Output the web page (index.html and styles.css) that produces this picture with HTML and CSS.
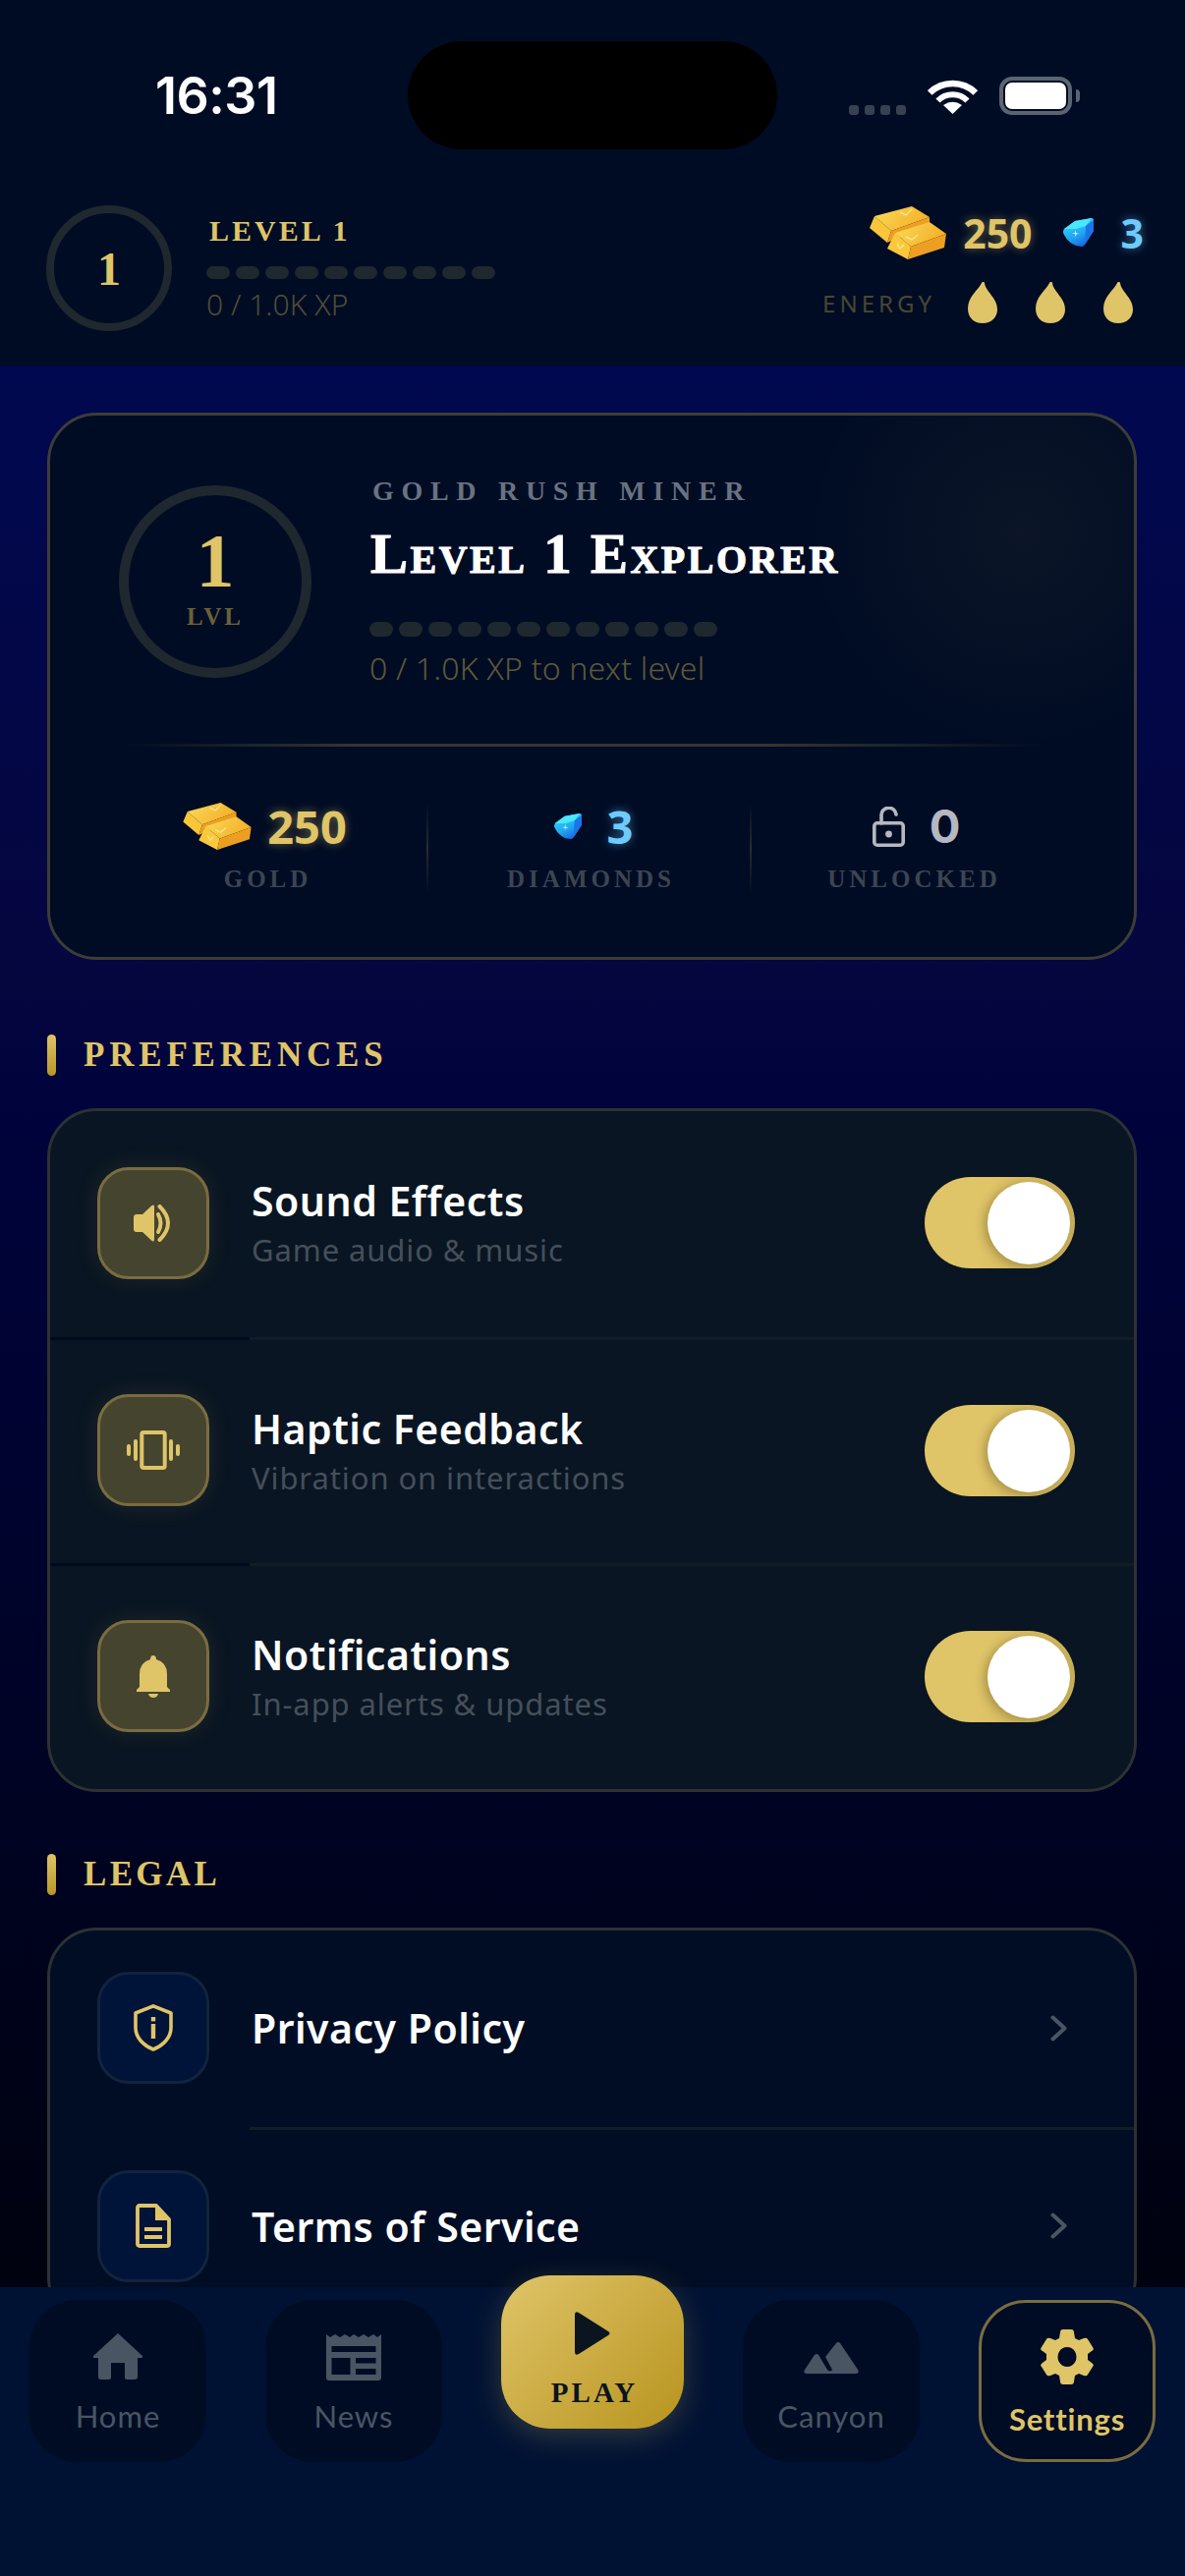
FILE: index.html
```html
<!DOCTYPE html>
<html lang="en">
<head>
    <meta charset="UTF-8">
    <meta name="viewport" content="width=device-width, initial-scale=1.0">
    <title>Settings</title>
    <link rel="stylesheet" href="styles.css">
</head>
<body>
    <svg class="defs" width="0" height="0" aria-hidden="true">
        <defs>
            <linearGradient id="barTop" x1="0" y1="0" x2="1" y2="0.4">
                <stop offset="0" stop-color="#f8dc5a"/>
                <stop offset="1" stop-color="#f5b02a"/>
            </linearGradient>
            <linearGradient id="gemFill" x1="0.2" y1="0" x2="0.7" y2="1">
                <stop offset="0" stop-color="#2fe3ff"/>
                <stop offset="0.6" stop-color="#21a4f2"/>
                <stop offset="1" stop-color="#1a5fe0"/>
            </linearGradient>
            <symbol id="bars" viewBox="0 0 78 54">
                <polygon points="5,10 43,0 61,11 22,25" fill="url(#barTop)"/>
                <polygon points="5,10 22,25 18,37 0,22" fill="#f9c63a"/>
                <polygon points="22,25 61,11 61,18 18,37" fill="#ec9f22"/>
                <polygon points="26,27 61,16 78,28 42,41" fill="url(#barTop)"/>
                <polygon points="26,27 42,41 39,54 18,43" fill="#fac83c"/>
                <polygon points="42,41 78,28 76,42 39,54" fill="#ec9f22"/>
                <path d="M31 6l6 3 6-6M37 31l6 3 6-5M28 38l3 5 4-4" fill="none" stroke="#fde68a" stroke-width="1.4"/>
            </symbol>
            <symbol id="gem" viewBox="0 0 32 30">
                <path d="M2 11 13 3 30 0q2 0 2 2v11L23 27q-1 2-3 2l-6-1Q6 25 2 17q-2-3 0-6z" fill="url(#gemFill)"/>
                <path d="M2 11 13 3 30 0 24 8 14 11z" fill="#49e8ff"/>
                <path d="M24 8 32 2v11l-9 14z" fill="#1c74e6"/>
                <path d="M13 16h-3l3-1 .5-3 .5 3 3 1-3 .5-.5 3z" fill="#e8fcff"/>
            </symbol>
            <symbol id="drop" viewBox="0 0 30 42">
                <path d="M17 1C18 10 30 16 30 28 30 36 24 42 15 42 6 42 0 36 0 27 0 15 10 9 14 1 15-.5 16.500-.5 17 1z" fill="#dfc468"/>
            </symbol>
            <symbol id="chevron" viewBox="0 0 17 27">
                <path d="M2.500 2.500 14.500 13.500 2.500 24.500" fill="none" stroke="#4a5563" stroke-width="4" stroke-linecap="round" stroke-linejoin="round"/>
            </symbol>
        </defs>
    </svg>

    <div class="app">
        <header class="top">
            <div class="status">
                <div class="clock">16:31</div>
                <div class="island"></div>
                <div class="status-icons">
                    <div class="signal"><i></i><i></i><i></i><i></i></div>
                    <svg class="wifi" viewBox="0 0 51 37">
                        <path d="M2.200 15.500A33.500 33.500 0 0 1 48.800 15.500" fill="none" stroke="#fff" stroke-width="6.600"/>
                        <path d="M10.500 23.500A21 21 0 0 1 40.500 23.500" fill="none" stroke="#fff" stroke-width="6"/>
                        <path d="M25.500 37 16 28Q25.500 21.500 35 28z" fill="#fff"/>
                    </svg>
                    <div class="battery"><div class="battery-fill"></div></div>
                    <div class="battery-nub"></div>
                </div>
            </div>
            <div class="player-row">
                <div class="level-ring">1</div>
                <div class="player-info">
                    <div class="player-level">LEVEL 1</div>
                    <div class="pips">
                        <i></i><i></i><i></i><i></i><i></i><i></i><i></i><i></i><i></i><i></i>
                    </div>
                    <div class="player-xp">0 / 1.0K XP</div>
                </div>
                <div class="wallet">
                    <div class="wallet-coins">
                        <svg class="bars"><use href="#bars"/></svg>
                        <span class="amount gold">250</span>
                        <svg class="gem"><use href="#gem"/></svg>
                        <span class="amount blue">3</span>
                    </div>
                    <div class="energy">
                        <span class="energy-label">ENERGY</span>
                        <svg class="drop"><use href="#drop"/></svg>
                        <svg class="drop"><use href="#drop"/></svg>
                        <svg class="drop"><use href="#drop"/></svg>
                    </div>
                </div>
            </div>
        </header>

        <main class="content">
            <section class="hero">
                <div class="hero-top">
                    <div class="hero-ring">
                        <span class="hero-num">1</span>
                        <span class="hero-lvl">LVL</span>
                    </div>
                    <div class="hero-info">
                        <div class="eyebrow">GOLD RUSH MINER</div>
                        <h1 class="hero-title">Level 1 Explorer</h1>
                        <div class="pips pips-big">
                            <i></i><i></i><i></i><i></i><i></i><i></i><i></i><i></i><i></i><i></i><i></i><i></i>
                        </div>
                        <div class="hero-xp">0 / 1.0K XP to next level</div>
                    </div>
                </div>
                <div class="hero-line"></div>
                <div class="stats">
                    <div class="stat">
                        <div class="stat-value">
                            <svg class="bars-sm"><use href="#bars"/></svg>
                            <span class="stat-num gold">250</span>
                        </div>
                        <div class="stat-label">GOLD</div>
                    </div>
                    <div class="stat">
                        <div class="stat-value">
                            <svg class="gem-sm"><use href="#gem"/></svg>
                            <span class="stat-num blue">3</span>
                        </div>
                        <div class="stat-label">DIAMONDS</div>
                    </div>
                    <div class="stat">
                        <div class="stat-value">
                            <svg class="lock" viewBox="0 0 33 41">
                                <path d="M9 17V9.500A7.500 7.500 0 0 1 24 8" fill="none" stroke="#b5b8c0" stroke-width="3.600" stroke-linecap="round"/>
                                <rect x="1.800" y="16.800" width="29.400" height="22.400" rx="3" fill="none" stroke="#b5b8c0" stroke-width="3.600"/>
                                <circle cx="16.500" cy="28" r="3.400" fill="#b5b8c0"/>
                            </svg>
                            <span class="stat-num grey">0</span>
                        </div>
                        <div class="stat-label">UNLOCKED</div>
                    </div>
                </div>
            </section>

            <h2 class="section-title">PREFERENCES</h2>
            <section class="card card-prefs">
                <div class="row row-pref">
                    <div class="icon-box icon-gold">
                        <svg class="ico-sound" viewBox="0 0 40 38">
                            <path d="M0 13q0-3 3-3h6L18 1.500q3-2.500 3 1v33q0 3.500-3 1L9 28H3q-3 0-3-3z" fill="#dfc468"/>
                            <path d="M25 10q5 9 0 18" fill="none" stroke="#dfc468" stroke-width="4" stroke-linecap="round"/>
                            <path d="M26.500 2q17 17 0 34" fill="none" stroke="#dfc468" stroke-width="4" stroke-linecap="round"/>
                        </svg>
                    </div>
                    <div class="row-text">
                        <div class="row-title">Sound Effects</div>
                        <div class="row-sub">Game audio &amp; music</div>
                    </div>
                    <div class="toggle"><div class="knob"></div></div>
                </div>
                <div class="row row-pref">
                    <div class="icon-box icon-gold">
                        <svg class="ico-haptic" viewBox="0 0 54 40">
                            <rect x="15.300" y="2" width="23.400" height="36" rx="2" fill="none" stroke="#dfc468" stroke-width="4"/>
                            <rect x="7" y="9" width="4" height="22" rx="2" fill="#dfc468"/>
                            <rect x="43" y="9" width="4" height="22" rx="2" fill="#dfc468"/>
                            <rect x="0" y="14" width="4" height="12" rx="2" fill="#dfc468"/>
                            <rect x="50" y="14" width="4" height="12" rx="2" fill="#dfc468"/>
                        </svg>
                    </div>
                    <div class="row-text">
                        <div class="row-title">Haptic Feedback</div>
                        <div class="row-sub">Vibration on interactions</div>
                    </div>
                    <div class="toggle"><div class="knob"></div></div>
                </div>
                <div class="row row-pref">
                    <div class="icon-box icon-gold">
                        <svg class="ico-bell" viewBox="0 0 34 43">
                            <path d="M14 4q0-4 3-4t3 4q11 3 11 15v13l3 3v2H0v-2l3-3V19Q3 7 14 4z" fill="#dfc468"/>
                            <path d="M12 39h10q-1 4-5 4t-5-4z" fill="#dfc468"/>
                        </svg>
                    </div>
                    <div class="row-text">
                        <div class="row-title">Notifications</div>
                        <div class="row-sub">In-app alerts &amp; updates</div>
                    </div>
                    <div class="toggle"><div class="knob"></div></div>
                </div>
            </section>

            <h2 class="section-title section-legal">LEGAL</h2>
            <section class="card card-legal">
                <div class="row row-link">
                    <div class="icon-box icon-blue">
                        <svg class="ico-shield" viewBox="0 0 40 48">
                            <path d="M20 1.800 38 9v15c0 10-8 18-18 22C10 42 2 34 2 24V9z" fill="none" stroke="#dfc468" stroke-width="3.600" stroke-linejoin="round"/>
                            <rect x="17.800" y="20" width="4.400" height="15" fill="#dfc468"/>
                            <rect x="17.800" y="13" width="4.400" height="4.400" fill="#dfc468"/>
                        </svg>
                    </div>
                    <div class="row-title">Privacy Policy</div>
                    <svg class="chevron"><use href="#chevron"/></svg>
                </div>
                <div class="row row-link">
                    <div class="icon-box icon-blue">
                        <svg class="ico-doc" viewBox="0 0 36 45">
                            <path d="M2 4q0-2 2-2h17l13 14v25q0 2-2 2H4q-2 0-2-2z" fill="none" stroke="#dfc468" stroke-width="3.800" stroke-linejoin="round"/>
                            <path d="M20 2v15h14z" fill="#dfc468"/>
                            <rect x="9" y="24" width="18" height="4" fill="#dfc468"/>
                            <rect x="9" y="32" width="18" height="4" fill="#dfc468"/>
                        </svg>
                    </div>
                    <div class="row-title">Terms of Service</div>
                    <svg class="chevron"><use href="#chevron"/></svg>
                </div>
            </section>
        </main>

        <nav class="tabbar">
            <div class="tab">
                <svg class="tab-icon ico-home" viewBox="0 0 50 47">
                    <path d="M25 0 50 23q1 2-1 2h-4v19q0 3-3 3h-8q-2 0-2-2V30H18v15q0 2-2 2H8q-3 0-3-3V25H1q-2 0-1-2z" fill="#4a5563"/>
                </svg>
                <span class="tab-label">Home</span>
            </div>
            <div class="tab">
                <svg class="tab-icon ico-news" viewBox="0 0 56 48">
                    <path fill-rule="evenodd" d="M0 1l4 3 5-3 5 3 5-3 5 3 4-3 5 3 5-3 5 3 5-3 4 3 4-3v44q0 3-3 3H3q-3 0-3-3zM5.500 13v6h45v-6zM5.500 25v17h19V25zM30 25v5.500h20.500V25zM30 36v6h20.500v-6z" fill="#4a5563"/>
                </svg>
                <span class="tab-label">News</span>
            </div>
            <div class="play">
                <svg class="play-icon" viewBox="0 0 36 44">
                    <path d="M0 3q0-4 4-2l30 19q3 2 0 4L4 43q-4 2-4-2z" fill="#0b1520"/>
                </svg>
                <span class="play-label">PLAY</span>
            </div>
            <div class="tab">
                <svg class="tab-icon ico-canyon" viewBox="0 0 56 32">
                    <path d="M33 1q2-2 4 0l18 27q2 4-2 4H3q-4 0-2-4L11 13q2-2 4 0l9 15q3 3 5 0l-7-13z" fill="#4a5563"/>
                </svg>
                <span class="tab-label">Canyon</span>
            </div>
            <div class="tab tab-active">
                <svg class="tab-icon ico-gear" viewBox="0 0 54 56">
                    <path fill-rule="evenodd" d="M20 3q0-3 3-3h8q3 0 3 3l1 6 4 2 5-2q3-1 4 1l5 8q2 3-1 4l-4 3v6l4 3q3 2 1 4l-5 8q-1 2-4 1l-5-2-4 2-1 6q0 3-3 3h-8q-3 0-3-3l-1-6-4-2-5 2q-3 1-4-1l-5-8q-2-2 1-4l4-3v-6l-4-3q-3-1-1-4l5-8q1-2 4-1l5 2 4-2zM27 18a9.500 10 0 1 0 .01 0z" fill="#dfc468"/>
                </svg>
                <span class="tab-label">Settings</span>
            </div>
        </nav>
    </div>
</body>
</html>
```

FILE: styles.css
```css
* {
    box-sizing: border-box;
}

body {
    margin: 0;
    background: #000;
    font-family: "Noto Sans", sans-serif;
}

.defs {
    display: block;
    height: 0;
}

.app {
    width: 1206px;
    height: 2622px;
    display: flex;
    flex-direction: column;
    overflow: hidden;
}

/* top bar */

.top {
    flex: 0 0 372px;
    background: #000c24;
}

.status {
    display: flex;
    padding-top: 42px;
    height: 152px;
}

.clock {
    width: 415px;
    padding-left: 158px;
    padding-top: 28px;
    font-family: Inter, sans-serif;
    font-size: 52px;
    line-height: 56px;
    font-weight: 600;
    letter-spacing: -0.5px;
    color: #fff;
}

.island {
    width: 376px;
    height: 110px;
    border-radius: 55px;
    background: #000;
}

.status-icons {
    display: flex;
    align-items: flex-start;
    padding-left: 73px;
    padding-top: 36px;
}

.signal {
    display: flex;
    gap: 6px;
    margin-top: 29px;
    margin-right: 22px;
}

.signal i {
    width: 10px;
    height: 10px;
    border-radius: 3px;
    background: #374151;
}

.wifi {
    width: 51px;
    height: 37px;
    margin-top: 1px;
    margin-right: 22px;
}

.battery {
    width: 74px;
    height: 39px;
    border: 4px solid #5b6472;
    border-radius: 13px;
    padding: 2px;
}

.battery-fill {
    height: 100%;
    border-radius: 7px;
    background: #fff;
}

.battery-nub {
    width: 4px;
    height: 13px;
    margin: 13px 0 0 4px;
    border-radius: 0 4px 4px 0;
    background: #5b6472;
}

.player-row {
    display: flex;
    padding: 57px 42px 0 47px;
}

.level-ring {
    width: 128px;
    height: 128px;
    border: 8px solid #1f282e;
    border-radius: 50%;
    display: flex;
    align-items: center;
    justify-content: center;
    font-family: "Liberation Serif", serif;
    font-size: 48px;
    font-weight: 700;
    color: #dfc468;
}

.player-info {
    margin-left: 35px;
    padding-top: 10px;
}

.player-level {
    padding-left: 3px;
    font-family: "Liberation Serif", serif;
    font-size: 30px;
    line-height: 32px;
    font-weight: 700;
    letter-spacing: 3px;
    color: #dfc468;
}

.pips {
    display: flex;
    gap: 6px;
    margin-top: 20px;
}

.pips i {
    width: 24px;
    height: 13px;
    border-radius: 7px;
    background: #1f282e;
}

.player-xp {
    margin-top: 11px;
    font-size: 30px;
    line-height: 30px;
    font-weight: 300;
    color: #524b36;
}

.wallet {
    margin-left: auto;
    padding-top: 1px;
}

.wallet-coins {
    display: flex;
    align-items: center;
    justify-content: flex-end;
}

.bars {
    width: 78px;
    height: 54px;
}

.gem {
    width: 32px;
    height: 30px;
    margin-left: 30px;
}

.amount {
    font-size: 41px;
    line-height: 54px;
    font-weight: 700;
    margin-left: 17px;
}

.gem + .amount {
    margin-left: 28px;
}

.gold {
    color: #dfc468;
    text-shadow: 0 0 10px rgba(223, 196, 104, 0.45);
}

.blue {
    color: #6ecbff;
    text-shadow: 0 0 10px rgba(110, 203, 255, 0.5);
}

.grey {
    font-family: Inter, sans-serif;
    font-size: 44px;
    color: #b5b8c0;
}

.energy {
    display: flex;
    align-items: center;
    justify-content: flex-end;
    gap: 39px;
    margin-top: 23px;
    margin-right: 11px;
}

.energy-label {
    font-size: 24px;
    letter-spacing: 4px;
    color: #4a4632;
    margin-right: -6px;
}

.drop {
    width: 30px;
    height: 42px;
}

/* scrolling part */

.content {
    flex: 1;
    min-height: 0;
    overflow: hidden;
    padding: 48px 49px 0 48px;
    background: linear-gradient(180deg, #00084f 0%, #06063f 32%, #00033c 38%, #000326 70%, #00020f 100%);
}

.hero {
    height: 557px;
    border: 3px solid #3d3d38;
    border-radius: 50px;
    padding-top: 55px;
    background: radial-gradient(circle 220px at 990px 120px, rgba(223, 196, 104, 0.05), rgba(223, 196, 104, 0) 100%), #000c24;
}

.hero-top {
    display: flex;
    padding-left: 70px;
}

.hero-ring {
    flex: 0 0 196px;
    height: 196px;
    margin-top: 16px;
    border: 10px solid #1f282e;
    border-radius: 50%;
    display: flex;
    flex-direction: column;
    align-items: center;
    font-family: "Liberation Serif", serif;
}

.hero-num {
    margin-top: 28px;
    font-size: 78px;
    line-height: 78px;
    font-weight: 700;
    color: #dfc468;
}

.hero-lvl {
    margin-top: 4px;
    font-size: 25px;
    line-height: 28px;
    font-weight: 700;
    letter-spacing: 3px;
    color: #6b6138;
}

.hero-info {
    margin-left: 59px;
}

.eyebrow {
    padding-left: 3px;
    font-family: "Liberation Serif", serif;
    font-size: 28px;
    line-height: 44px;
    font-weight: 700;
    letter-spacing: 7.700px;
    color: #6b7280;
}

.hero-title {
    margin: 10px 0 0;
    padding-left: 1px;
    font-family: "Liberation Serif", serif;
    font-size: 57px;
    line-height: 64px;
    font-weight: 700;
    font-variant: small-caps;
    letter-spacing: 2.500px;
    -webkit-text-stroke: 1px #fff;
    color: #fff;
}

.pips-big {
    margin-top: 37px;
}

.pips-big i {
    height: 15px;
    border-radius: 8px;
}

.hero-xp {
    margin-top: 12px;
    font-size: 32px;
    line-height: 40px;
    font-weight: 300;
    letter-spacing: 0.200px;
    color: #5f5838;
}

.hero-line {
    height: 3px;
    margin: 57px 90px 0 75px;
    background: linear-gradient(90deg, rgba(70, 70, 50, 0), #35362c 25%, #35362c 70%, rgba(70, 70, 50, 0));
}

.stats {
    display: grid;
    grid-template-columns: repeat(3, 329px);
    margin: 57px 0 0 54px;
}

.stat {
    display: flex;
    flex-direction: column;
    align-items: center;
}

.stat + .stat {
    background: linear-gradient(180deg, rgba(60, 60, 50, 0), #2a2c2a 50%, rgba(60, 60, 50, 0)) no-repeat left top / 2px 100%;
}

.stat + .stat .stat-value {
    padding-left: 10px;
}

.stat-value {
    display: flex;
    align-items: center;
    height: 48px;
}

.bars-sm {
    width: 70px;
    height: 48px;
    margin-right: 16px;
}

.gem-sm {
    width: 29px;
    height: 27px;
    margin-right: 26px;
}

.lock {
    width: 33px;
    height: 41px;
    margin-right: 25px;
}

.stat-num {
    font-size: 47px;
    line-height: 48px;
    font-weight: 700;
}

.stat-label {
    margin-top: 15px;
    padding-left: 6px;
    font-family: "Liberation Serif", serif;
    font-size: 25px;
    line-height: 30px;
    font-weight: 700;
    letter-spacing: 4px;
    color: #3d4552;
}

/* sections */

.section-title {
    display: flex;
    gap: 28px;
    margin: 76px 0 33px;
    height: 42px;
    font-family: "Liberation Serif", serif;
    font-size: 35px;
    line-height: 42px;
    font-weight: 700;
    letter-spacing: 4.800px;
    color: #dfc468;
}

.section-title::before {
    content: "";
    width: 9px;
    height: 42px;
    border-radius: 5px;
    background: linear-gradient(180deg, #dfc468, #b8962a);
}

.section-legal {
    margin-top: 63px;
    letter-spacing: 3.300px;
}

.card {
    border: 3px solid #2b3233;
    border-radius: 50px;
    overflow: hidden;
}

.card-prefs {
    background: #091522;
}

.card-legal {
    background: #000d24;
}

.row {
    display: flex;
    align-items: center;
    padding: 0 68px 0 48px;
}

.row-pref {
    height: 230px;
    padding-right: 60px;
    padding-bottom: 3px;
}

.row-pref + .row-pref,
.row-link + .row-link {
    border-top: 3px solid;
}

.row-pref + .row-pref {
    border-image: linear-gradient(90deg, #000a1f 204px, #121c26 204px) 1;
}

.row-link {
    height: 200px;
    padding-bottom: 2px;
}

.row-link + .row-link {
    border-image: linear-gradient(90deg, #000d24 204px, #121c26 204px) 1;
}

.icon-box {
    flex: 0 0 114px;
    height: 114px;
    border-radius: 32px;
    display: flex;
    align-items: center;
    justify-content: center;
    margin-right: 43px;
}

.icon-gold {
    background: #45442f;
    border: 3px solid #7a6c40;
    box-shadow: 0 0 24px rgba(223, 196, 104, 0.1);
}

.icon-blue {
    background: #001338;
    border: 3px solid #12233d;
}

.ico-sound {
    width: 40px;
    height: 38px;
}

.ico-haptic {
    width: 54px;
    height: 40px;
}

.ico-bell {
    width: 34px;
    height: 43px;
}

.ico-shield {
    width: 40px;
    height: 48px;
}

.ico-doc {
    width: 36px;
    height: 45px;
}

.row-text {
    flex: 1;
}

.row-title {
    flex: 1;
    font-family: "Noto Sans", sans-serif;
    font-size: 41px;
    line-height: 50px;
    font-weight: 600;
    letter-spacing: 0.500px;
    color: #fff;
}

.row-sub {
    margin-top: 5px;
    font-family: "Noto Sans", sans-serif;
    font-size: 31px;
    line-height: 40px;
    letter-spacing: 0.900px;
    color: #454f5a;
}

.chevron {
    width: 17px;
    height: 27px;
}

.toggle {
    width: 153px;
    height: 93px;
    padding: 5px;
    border-radius: 47px;
    display: flex;
    justify-content: flex-end;
    background: linear-gradient(100deg, #dfc468 40%, #c9ae58);
}

.knob {
    width: 84px;
    height: 84px;
    border-radius: 50%;
    background: #fff;
    box-shadow: -4px 2px 10px rgba(60, 50, 10, 0.3);
}

/* bottom nav */

.tabbar {
    flex: 0 0 294px;
    display: flex;
    gap: 60px;
    padding: 13px 30px 0;
    background: #001233;
}

.tab {
    flex: 0 0 180px;
    height: 165px;
    border-radius: 48px;
    background: #000c24;
    display: flex;
    flex-direction: column;
    align-items: center;
}

.tab-icon {
    margin-top: 34px;
    height: 47px;
}

.ico-home {
    width: 50px;
}

.ico-news {
    width: 56px;
    height: 48px;
    margin-bottom: -1px;
}

.ico-canyon {
    width: 56px;
    height: 32px;
    margin-top: 43px;
    margin-bottom: 6px;
}

.ico-gear {
    width: 54px;
    height: 56px;
    margin-top: 27px;
    margin-bottom: 0;
}

.tab-label {
    margin-top: 17px;
    font-family: Lato, sans-serif;
    font-size: 31px;
    line-height: 40px;
    letter-spacing: 1px;
    color: #4a5563;
}

.tab-active {
    border: 3px solid #7a6c40;
}

.tab-active .tab-label {
    margin-top: 15px;
    font-weight: 700;
    color: #dfc468;
    letter-spacing: 0.800px;
}

.play {
    flex: 0 0 186px;
    height: 156px;
    margin-top: -25px;
    border-radius: 50px;
    display: flex;
    flex-direction: column;
    align-items: center;
    background: linear-gradient(135deg, #dfc468, #b8941f);
    box-shadow: 0 8px 30px rgba(223, 196, 104, 0.22);
}

.play-icon {
    width: 36px;
    height: 44px;
    margin-top: 37px;
}

.play-label {
    margin-top: 22px;
    padding-left: 4px;
    font-family: "Liberation Serif", serif;
    font-size: 29px;
    line-height: 32px;
    font-weight: 700;
    letter-spacing: 3px;
    color: #0b1520;
}
```
